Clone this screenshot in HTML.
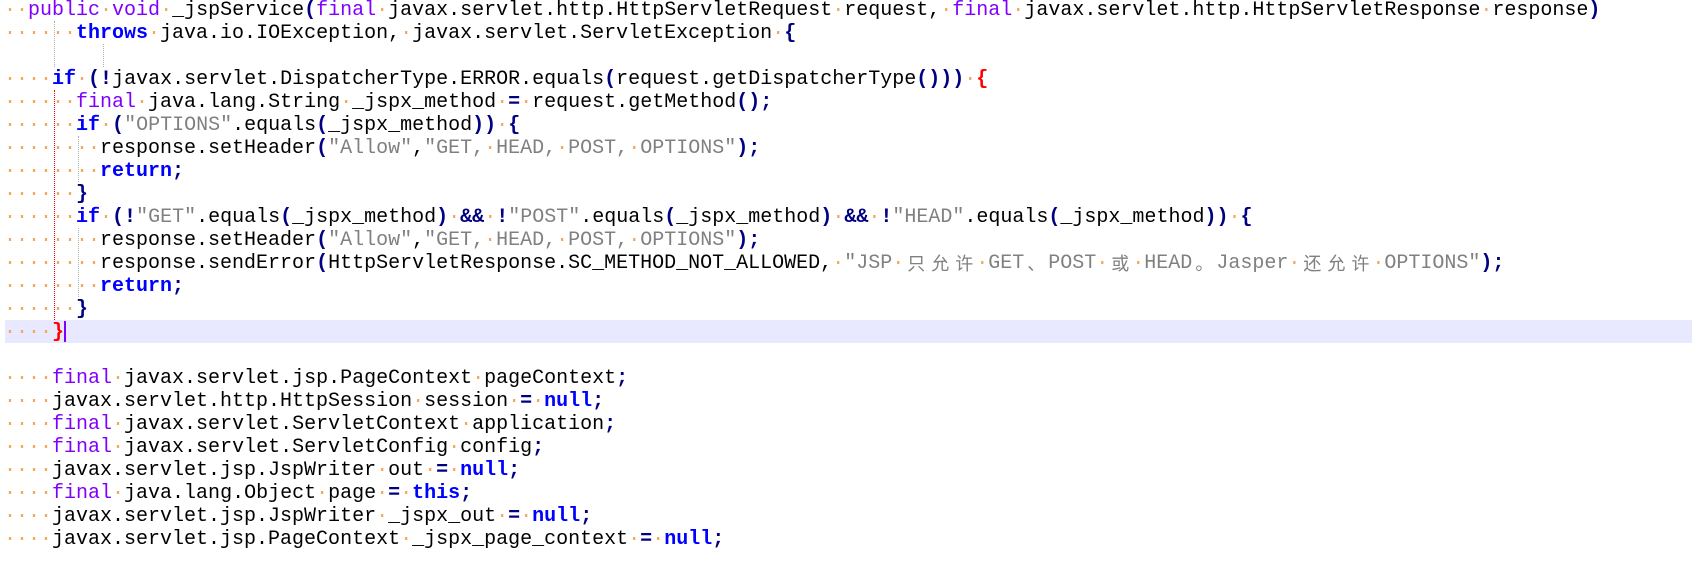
<!DOCTYPE html>
<html><head><meta charset="utf-8"><style>
html,body{margin:0;padding:0;background:#fff;width:1692px;height:571px;overflow:hidden}
#code{position:absolute;left:4px;top:-1.5px;font-family:"Liberation Mono",monospace;font-size:20px;line-height:23px;color:#000}
.l{height:23px;position:relative;white-space:pre}
.d{color:#f4a860}
.k{color:#8000ff}
.b{color:#0000ff;font-weight:bold}
.o{color:#000080;font-weight:bold}
.s{color:#808080}
.r{color:#ff0000;font-weight:bold}
.c{display:inline-block;width:24px;text-align:center;font-family:"Noto Sans CJK SC",sans-serif;font-size:18px;color:#808080;line-height:23px;vertical-align:top}
#hl{position:absolute;left:5px;top:320px;width:1687px;height:23px;background:#e8e8ff}
.g{position:absolute;width:0;border-left:1px dotted #b0b0b0}
#cur{position:absolute;left:64px;top:321px;width:2px;height:21px;background:#8000ff}
</style></head><body>
<div id="hl"></div>
<div class="g" style="left:54px;top:21px;height:46px"></div>
<div class="g" style="left:103px;top:44px;height:23px"></div>
<div class="g" style="left:54px;top:90px;height:230px;border-left-color:#ff0000"></div>
<div class="g" style="left:78px;top:136px;height:46px"></div>
<div class="g" style="left:78px;top:228px;height:69px"></div>
<div id="code"><div class="l"><span class="d">··</span><span class="k">public</span><span class="d">·</span><span class="k">void</span><span class="d">·</span>_jspService<span class="o">(</span><span class="k">final</span><span class="d">·</span>javax.servlet.http.HttpServletRequest<span class="d">·</span>request,<span class="d">·</span><span class="k">final</span><span class="d">·</span>javax.servlet.http.HttpServletResponse<span class="d">·</span>response<span class="o">)</span></div>
<div class="l"><span class="d">······</span><span class="b">throws</span><span class="d">·</span>java.io.IOException,<span class="d">·</span>javax.servlet.ServletException<span class="d">·</span><span class="o">{</span></div>
<div class="l"> </div>
<div class="l"><span class="d">····</span><span class="b">if</span><span class="d">·</span><span class="o">(!</span>javax.servlet.DispatcherType.ERROR.equals<span class="o">(</span>request.getDispatcherType<span class="o">()))</span><span class="d">·</span><span class="r">{</span></div>
<div class="l"><span class="d">······</span><span class="k">final</span><span class="d">·</span>java.lang.String<span class="d">·</span>_jspx_method<span class="d">·</span><span class="o">=</span><span class="d">·</span>request.getMethod<span class="o">();</span></div>
<div class="l"><span class="d">······</span><span class="b">if</span><span class="d">·</span><span class="o">(</span><span class="s">"OPTIONS"</span>.equals<span class="o">(</span>_jspx_method<span class="o">))</span><span class="d">·</span><span class="o">{</span></div>
<div class="l"><span class="d">········</span>response.setHeader<span class="o">(</span><span class="s">"Allow"</span>,<span class="s">"GET,<span class="d">·</span>HEAD,<span class="d">·</span>POST,<span class="d">·</span>OPTIONS"</span><span class="o">);</span></div>
<div class="l"><span class="d">········</span><span class="b">return</span><span class="o">;</span></div>
<div class="l"><span class="d">······</span><span class="o">}</span></div>
<div class="l"><span class="d">······</span><span class="b">if</span><span class="d">·</span><span class="o">(!</span><span class="s">"GET"</span>.equals<span class="o">(</span>_jspx_method<span class="o">)</span><span class="d">·</span><span class="o">&amp;&amp;</span><span class="d">·</span><span class="o">!</span><span class="s">"POST"</span>.equals<span class="o">(</span>_jspx_method<span class="o">)</span><span class="d">·</span><span class="o">&amp;&amp;</span><span class="d">·</span><span class="o">!</span><span class="s">"HEAD"</span>.equals<span class="o">(</span>_jspx_method<span class="o">))</span><span class="d">·</span><span class="o">{</span></div>
<div class="l"><span class="d">········</span>response.setHeader<span class="o">(</span><span class="s">"Allow"</span>,<span class="s">"GET,<span class="d">·</span>HEAD,<span class="d">·</span>POST,<span class="d">·</span>OPTIONS"</span><span class="o">);</span></div>
<div class="l"><span class="d">········</span>response.sendError<span class="o">(</span>HttpServletResponse.SC_METHOD_NOT_ALLOWED,<span class="d">·</span><span class="s">"JSP<span class="d">·</span><span class="c">只</span><span class="c">允</span><span class="c">许</span><span class="d">·</span>GET<span class="c">、</span>POST<span class="d">·</span><span class="c">或</span><span class="d">·</span>HEAD<span class="c">。</span>Jasper<span class="d">·</span><span class="c">还</span><span class="c">允</span><span class="c">许</span><span class="d">·</span>OPTIONS"</span><span class="o">);</span></div>
<div class="l"><span class="d">········</span><span class="b">return</span><span class="o">;</span></div>
<div class="l"><span class="d">······</span><span class="o">}</span></div>
<div class="l"><span class="d">····</span><span class="r">}</span></div>
<div class="l"> </div>
<div class="l"><span class="d">····</span><span class="k">final</span><span class="d">·</span>javax.servlet.jsp.PageContext<span class="d">·</span>pageContext<span class="o">;</span></div>
<div class="l"><span class="d">····</span>javax.servlet.http.HttpSession<span class="d">·</span>session<span class="d">·</span><span class="o">=</span><span class="d">·</span><span class="b">null</span><span class="o">;</span></div>
<div class="l"><span class="d">····</span><span class="k">final</span><span class="d">·</span>javax.servlet.ServletContext<span class="d">·</span>application<span class="o">;</span></div>
<div class="l"><span class="d">····</span><span class="k">final</span><span class="d">·</span>javax.servlet.ServletConfig<span class="d">·</span>config<span class="o">;</span></div>
<div class="l"><span class="d">····</span>javax.servlet.jsp.JspWriter<span class="d">·</span>out<span class="d">·</span><span class="o">=</span><span class="d">·</span><span class="b">null</span><span class="o">;</span></div>
<div class="l"><span class="d">····</span><span class="k">final</span><span class="d">·</span>java.lang.Object<span class="d">·</span>page<span class="d">·</span><span class="o">=</span><span class="d">·</span><span class="b">this</span><span class="o">;</span></div>
<div class="l"><span class="d">····</span>javax.servlet.jsp.JspWriter<span class="d">·</span>_jspx_out<span class="d">·</span><span class="o">=</span><span class="d">·</span><span class="b">null</span><span class="o">;</span></div>
<div class="l"><span class="d">····</span>javax.servlet.jsp.PageContext<span class="d">·</span>_jspx_page_context<span class="d">·</span><span class="o">=</span><span class="d">·</span><span class="b">null</span><span class="o">;</span></div></div>
<div id="cur"></div>
</body></html>
